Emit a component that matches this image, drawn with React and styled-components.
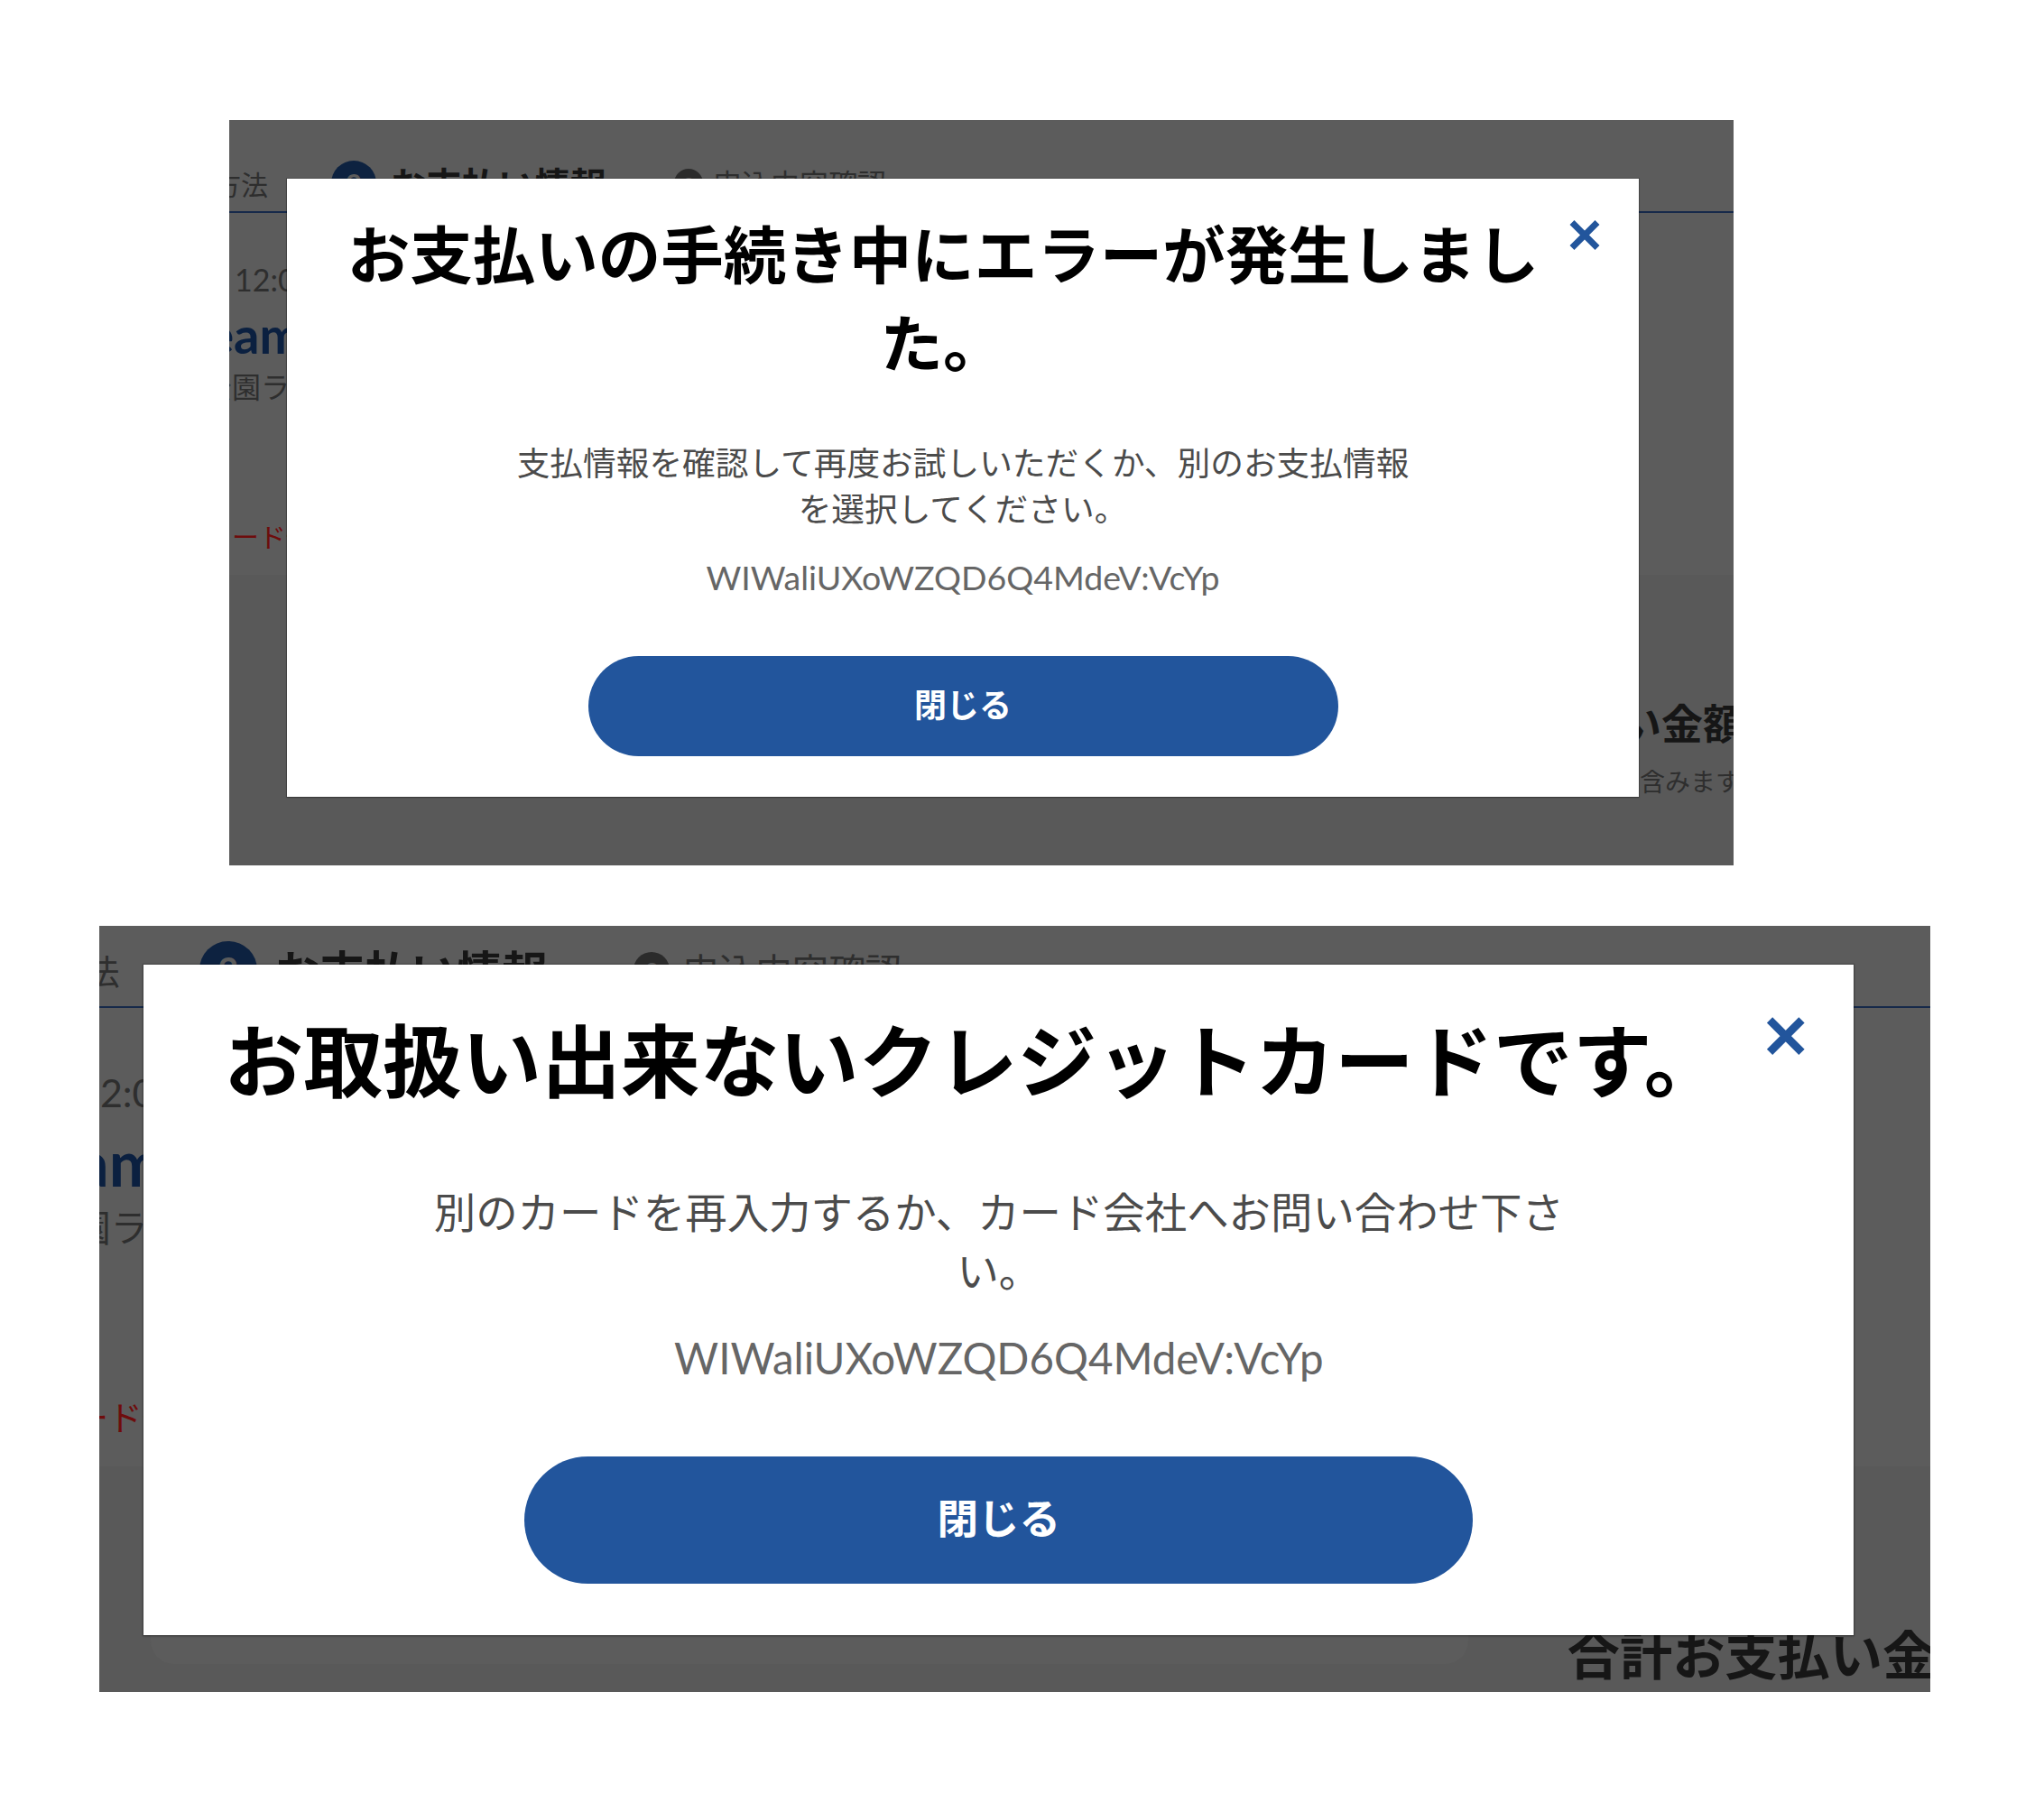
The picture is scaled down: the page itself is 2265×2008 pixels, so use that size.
import React from 'react';
import styled, { createGlobalStyle } from 'styled-components';

const Global = createGlobalStyle`
  html, body { margin: 0; padding: 0; background: #ffffff; }
  body { font-family: "Noto Sans CJK JP", "Noto Sans", sans-serif; }
  * { box-sizing: border-box; }
`;

const Sheet = styled.main`
  display: flex;
  flex-direction: column;
  align-items: flex-start;
  gap: 67px;
  padding-top: 133px;
  min-height: 2008px;
`;

const Slot = styled.section`
  margin-left: ${(p) => p.$left}px;
`;

const Shot = styled.div`
  zoom: ${(p) => p.$zoom};
  position: relative;
  overflow: hidden;
  width: ${(p) => p.$w}px;
  height: ${(p) => p.$h}px;
  background: #5c5c5c;
`;

/* the page behind the dialog, already dimmed by the backdrop */
const DimmedPage = styled.div`
  width: 1760px;
  margin-left: ${(p) => -p.$dx}px;
  margin-top: ${(p) => -p.$dy}px;
  color: #2e2e2e;
  font-family: Lato, "Noto Sans CJK JP", sans-serif;
`;

const StepBar = styled.div`
  display: flex;
  align-items: center;
  height: 103px;
  padding-top: 38px;
  border-bottom: 2px solid #16294a;
`;

const StepLabel = styled.span`
  margin-left: ${(p) => p.$ml}px;
  font-family: "Noto Sans CJK JP", sans-serif;
  font-size: ${(p) => p.$size}px;
  font-weight: ${(p) => (p.$bold ? 700 : 400)};
  color: ${(p) => p.$color};
  white-space: nowrap;
  line-height: 1.2;
`;

const StepDot = styled.span`
  margin-left: ${(p) => p.$ml}px;
  width: ${(p) => p.$d}px;
  height: ${(p) => p.$d}px;
  border-radius: 50%;
  background: ${(p) => p.$bg};
  color: #5c5c5c;
  display: grid;
  place-items: center;
  font-family: Lato, sans-serif;
  font-weight: 700;
  font-size: ${(p) => p.$d * 0.62}px;
  flex: none;
`;

const PageLine = styled.div`
  margin-top: ${(p) => p.$mt}px;
  margin-left: ${(p) => p.$ml}px;
  font-size: ${(p) => p.$size}px;
  font-weight: ${(p) => (p.$bold ? 700 : 400)};
  color: ${(p) => p.$color};
  line-height: 1.2;
  white-space: nowrap;
`;

const LowerSection = styled.div`
  margin-top: 25px;
  height: 420px;
  background: #595959;
  display: flex;
  align-items: flex-start;
`;

const PlanCard = styled.div`
  margin: 13px 0 0 70px;
  width: 1154px;
  height: 160px;
  border-radius: 20px;
  background: #5c5c5c;
  flex: none;
`;

const Summary = styled.div`
  margin-left: 87px;
  padding-top: 135px;
  display: flex;
  flex-direction: column;
  font-family: "Noto Sans CJK JP", sans-serif;
`;

const SummaryTitle = styled.div`
  font-size: 46px;
  line-height: 55px;
  font-weight: 700;
  color: #161616;
  white-space: nowrap;
`;

const SummaryNote = styled.div`
  margin-top: 21px;
  font-size: 28px;
  line-height: 34px;
  color: #2e2e2e;
  white-space: nowrap;
`;

const Modal = styled.div`
  position: absolute;
  left: ${(p) => p.$x}px;
  top: ${(p) => p.$y}px;
  width: 1498px;
  padding: 32px 0 45px;
  background: #ffffff;
  box-shadow: 0 0 0 1px rgba(0, 0, 0, 0.16), 0 1px 2px rgba(0, 0, 0, 0.3);
  display: flex;
  flex-direction: column;
  align-items: center;
`;

const CloseButton = styled.button`
  position: absolute;
  top: 45px;
  right: 42px;
  width: 36px;
  height: 35px;
  padding: 0;
  border: 0;
  background: none;
  display: block;
  cursor: pointer;
  svg { display: block; }
`;

const Title = styled.h2`
  align-self: stretch;
  margin: 0;
  padding: 0 94px 0 50px;
  font-size: 69.5px;
  line-height: 98px;
  font-weight: 700;
  color: #000000;
  text-align: center;
`;

const Message = styled.p`
  width: 1010px;
  margin: 60px 0 0;
  font-size: 36.7px;
  line-height: 51px;
  font-weight: 400;
  color: #4b4b4b;
  text-align: center;
`;

const ErrorCode = styled.p`
  margin: 27px 0 0;
  font-family: Lato, "Noto Sans", sans-serif;
  font-size: 37.5px;
  line-height: 50px;
  color: #666666;
  text-align: center;
`;

const PrimaryButton = styled.button`
  margin-top: 62px;
  width: 831px;
  height: 111px;
  padding: 0 0 7px;
  border: 0;
  border-radius: 56px;
  background: #22559c;
  color: #ffffff;
  font-family: "Noto Sans CJK JP", sans-serif;
  font-size: 36px;
  font-weight: 700;
  cursor: pointer;
`;

const CloseIcon = () => (
  <svg width="36" height="35" viewBox="0 0 36 35" aria-hidden="true">
    <path d="M4 3.5 L32 31.5 M32 3.5 L4 31.5" stroke="#22559c" strokeWidth="7" fill="none" />
  </svg>
);

const ErrorDialog = ({ x, y, title, message, code }) => (
  <Modal $x={x} $y={y} role="dialog">
    <CloseButton aria-label="閉じる">
      <CloseIcon />
    </CloseButton>
    <Title>{title}</Title>
    <Message>{message}</Message>
    <ErrorCode>{code}</ErrorCode>
    <PrimaryButton>閉じる</PrimaryButton>
  </Modal>
);

const PageBehind = ({ dx, dy }) => (
  <DimmedPage $dx={dx} $dy={dy}>
    <StepBar>
      <StepLabel $ml={-107} $size={30} $color="#2e2e2e">お届け方法</StepLabel>
      <StepDot $ml={70} $d={50} $bg="#0d2240">2</StepDot>
      <StepLabel $ml={15} $size={40} $bold $color="#161616">お支払い情報</StepLabel>
      <StepDot $ml={75} $d={32} $bg="#2b2b2b">3</StepDot>
      <StepLabel $ml={11} $size={32} $color="#2e2e2e">申込内容確認</StepLabel>
    </StepBar>
    <PageLine $mt={54} $ml={6} $size={34} $color="#2e2e2e">12:00〜13:00</PageLine>
    <PageLine $mt={6} $ml={-87} $size={56} $bold $color="#0b2040">Dream Park</PageLine>
    <PageLine $mt={6} $ml={-29} $size={32} $color="#2e2e2e">公園ランド</PageLine>
    <PageLine $mt={128} $ml={-27} $size={30} $color="#6e0c0c">カード情報を入力してください</PageLine>
    <LowerSection>
      <PlanCard />
      <Summary>
        <SummaryTitle>合計お支払い金額</SummaryTitle>
        <SummaryNote>※消費税・手数料を含みます</SummaryNote>
      </Summary>
    </LowerSection>
  </DimmedPage>
);

const shots = [
  {
    left: 254,
    zoom: 1,
    w: 1667,
    h: 826,
    dx: 0,
    dy: 0,
    title: 'お支払いの手続き中にエラーが発生しました。',
    message: '支払情報を確認して再度お試しいただくか、別のお支払情報を選択してください。',
  },
  {
    left: 110,
    zoom: 1.265,
    w: 1604,
    h: 671,
    dx: 25,
    dy: 31,
    title: 'お取扱い出来ないクレジットカードです。',
    message: '別のカードを再入力するか、カード会社へお問い合わせ下さい。',
  },
];

export default function App() {
  return (
    <>
      <Global />
      <Sheet>
        {shots.map((s) => (
          <Slot key={s.title} $left={s.left}>
            <Shot $zoom={s.zoom} $w={s.w} $h={s.h}>
              <PageBehind dx={s.dx} dy={s.dy} />
              <ErrorDialog
                x={64 - s.dx}
                y={65 - s.dy}
                title={s.title}
                message={s.message}
                code="WIWaliUXoWZQD6Q4MdeV:VcYp"
              />
            </Shot>
          </Slot>
        ))}
      </Sheet>
    </>
  );
}
